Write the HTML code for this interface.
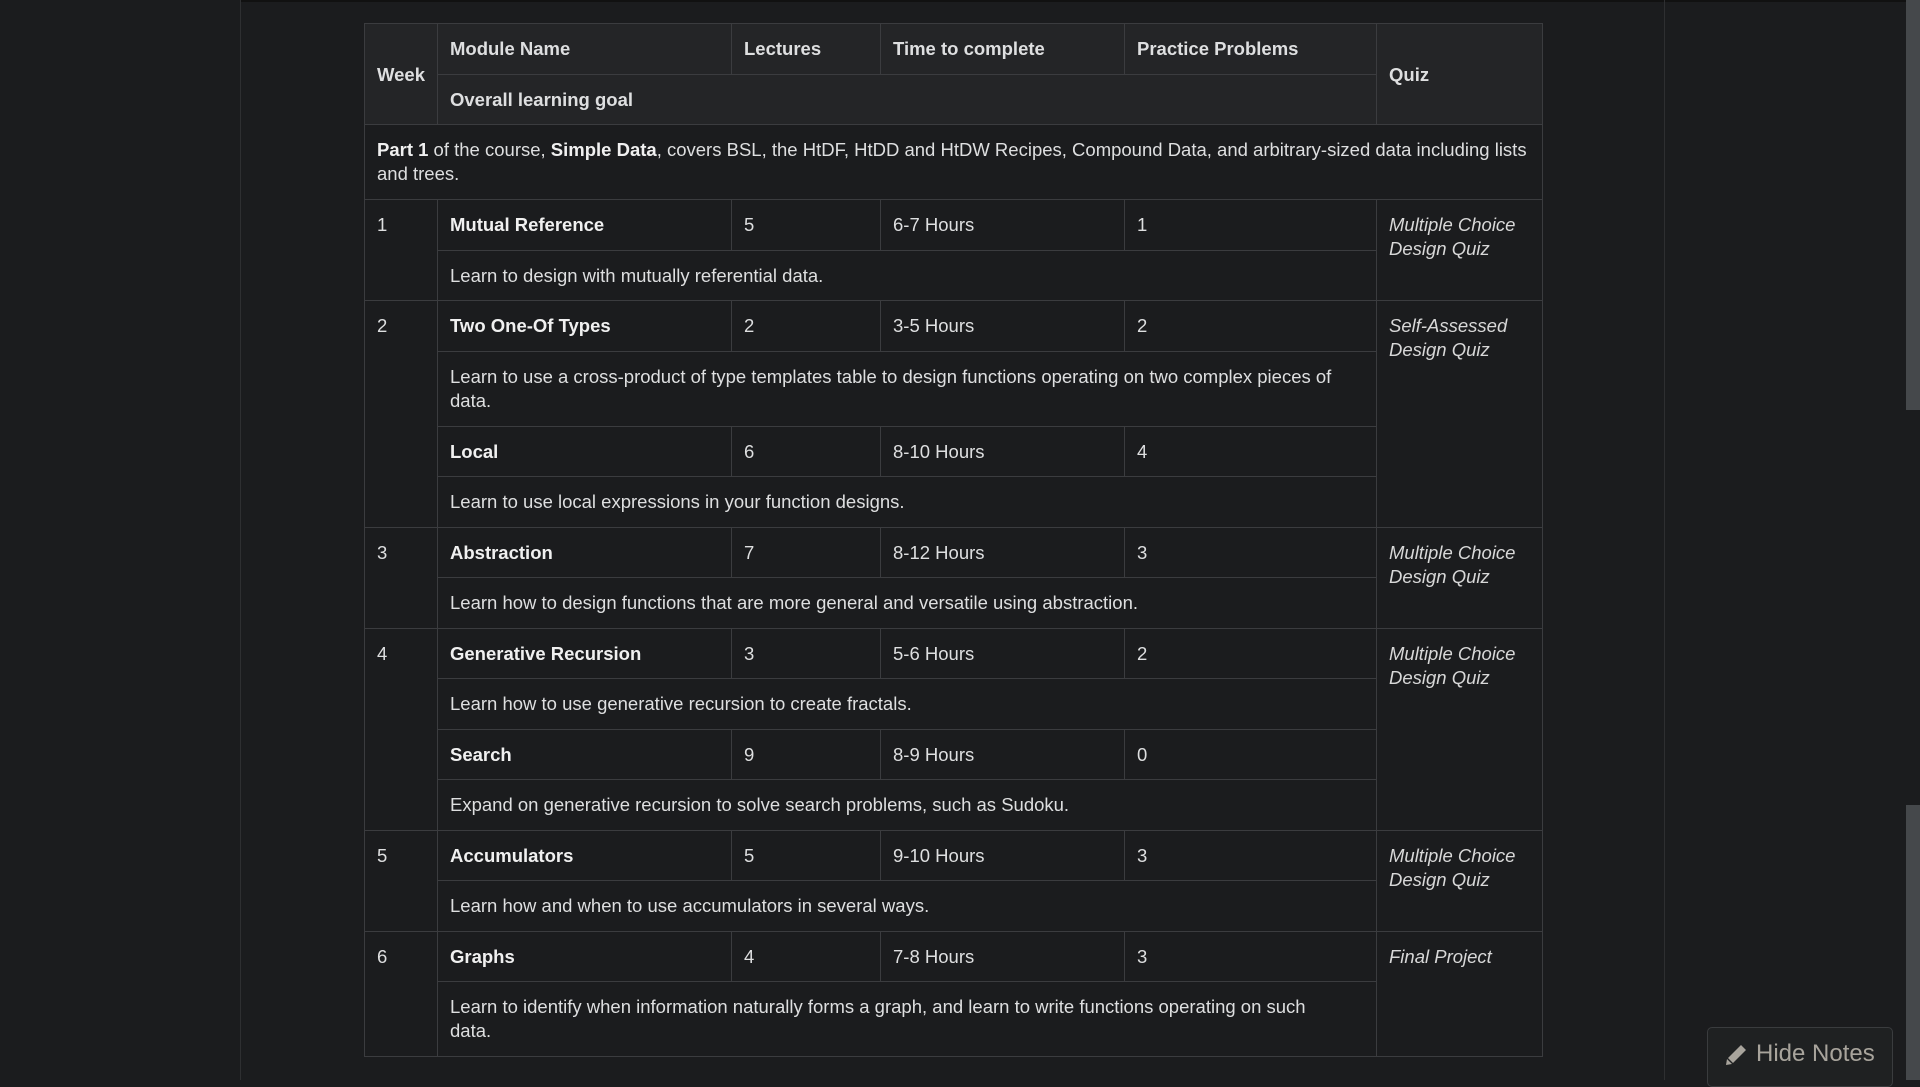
<!DOCTYPE html>
<html><head><meta charset="utf-8"><style>
html,body{margin:0;padding:0;background:#1b1c1e;width:1920px;height:1080px;overflow:hidden;font-family:"Liberation Sans",sans-serif;color:#dedfe0}
.lp{position:absolute;left:0;top:0;width:240px;height:1080px;border-right:1px solid #2e2f31;background:#1b1c1e}
.rp{position:absolute;left:1664px;top:0;width:1px;height:1080px;background:#2e2f31}
.sb{position:absolute;left:1906px;top:0;width:14px;height:1080px;background:#1b1c1e}
.sb1{position:absolute;left:1906px;top:0;width:14px;height:410px;background:#45484b}
.sb2{position:absolute;left:1906px;top:805px;width:14px;height:275px;background:#45484b}
.topline{position:absolute;left:0;top:0;width:1920px;height:2px;background:#111}
table{position:absolute;left:364px;top:23px;border-collapse:collapse;table-layout:fixed;width:1178px;font-size:18.5px;line-height:24px}
td,th{border:1px solid #3b3c3f;padding:13px 12px 10px;vertical-align:top;text-align:left}
th{background:#242527;font-weight:bold;vertical-align:middle;padding:12px 12px 11px}
tr{height:50.5px}
tr.d{height:75px}
b{font-weight:bold;color:#f0f0f0}
i{color:#d8d8d8}
.btn{position:absolute;left:1707px;top:1027px;width:186px;height:60px;background:#1f2122;border:1px solid #3a3c3e;border-radius:5px;color:#a8a49c;font-size:24px;line-height:52px;box-sizing:border-box;padding-left:48px}
.btn svg{position:absolute;left:16px;top:15px}
</style></head><body>
<div class="topline"></div>
<div class="lp"></div><div class="rp"></div>
<div class="sb"></div><div class="sb1"></div><div class="sb2"></div>
<table>
<colgroup><col style="width:73px"><col style="width:294px"><col style="width:149px"><col style="width:244px"><col style="width:252px"><col style="width:166px"></colgroup>
<tr><th rowspan="2">Week</th><th>Module Name</th><th>Lectures</th><th>Time to complete</th><th>Practice Problems</th><th rowspan="2">Quiz</th></tr>
<tr><th colspan="4">Overall learning goal</th></tr>
<tr class="d"><td colspan="6"><b>Part 1</b> of the course, <b>Simple Data</b>, covers BSL, the HtDF, HtDD and HtDW Recipes, Compound Data, and arbitrary-sized data including lists<br>and trees.</td></tr>
<tr><td rowspan="2">1</td><td><b>Mutual Reference</b></td><td>5</td><td>6-7 Hours</td><td>1</td><td rowspan="2"><i>Multiple Choice Design Quiz</i></td></tr>
<tr><td colspan="4">Learn to design with mutually referential data.</td></tr>
<tr><td rowspan="4">2</td><td><b>Two One-Of Types</b></td><td>2</td><td>3-5 Hours</td><td>2</td><td rowspan="4"><i>Self-Assessed Design Quiz</i></td></tr>
<tr class="d"><td colspan="4">Learn to use a cross-product of type templates table to design functions operating on two complex pieces of<br>data.</td></tr>
<tr><td><b>Local</b></td><td>6</td><td>8-10 Hours</td><td>4</td></tr>
<tr><td colspan="4">Learn to use local expressions in your function designs.</td></tr>
<tr><td rowspan="2">3</td><td><b>Abstraction</b></td><td>7</td><td>8-12 Hours</td><td>3</td><td rowspan="2"><i>Multiple Choice Design Quiz</i></td></tr>
<tr><td colspan="4">Learn how to design functions that are more general and versatile using abstraction.</td></tr>
<tr><td rowspan="4">4</td><td><b>Generative Recursion</b></td><td>3</td><td>5-6 Hours</td><td>2</td><td rowspan="4"><i>Multiple Choice Design Quiz</i></td></tr>
<tr><td colspan="4">Learn how to use generative recursion to create fractals.</td></tr>
<tr><td><b>Search</b></td><td>9</td><td>8-9 Hours</td><td>0</td></tr>
<tr><td colspan="4">Expand on generative recursion to solve search problems, such as Sudoku.</td></tr>
<tr><td rowspan="2">5</td><td><b>Accumulators</b></td><td>5</td><td>9-10 Hours</td><td>3</td><td rowspan="2"><i>Multiple Choice Design Quiz</i></td></tr>
<tr><td colspan="4">Learn how and when to use accumulators in several ways.</td></tr>
<tr><td rowspan="2">6</td><td><b>Graphs</b></td><td>4</td><td>7-8 Hours</td><td>3</td><td rowspan="2"><i>Final Project</i></td></tr>
<tr class="d"><td colspan="4">Learn to identify when information naturally forms a graph, and learn to write functions operating on such<br>data.</td></tr>
</table>
<div class="btn"><svg width="24" height="24" viewBox="0 0 24 24"><path d="M17 2l5 5L9 20l-5-5z M3 16l5 5-6 1z" fill="#a8a49c"/></svg>Hide Notes</div>
</body></html>
